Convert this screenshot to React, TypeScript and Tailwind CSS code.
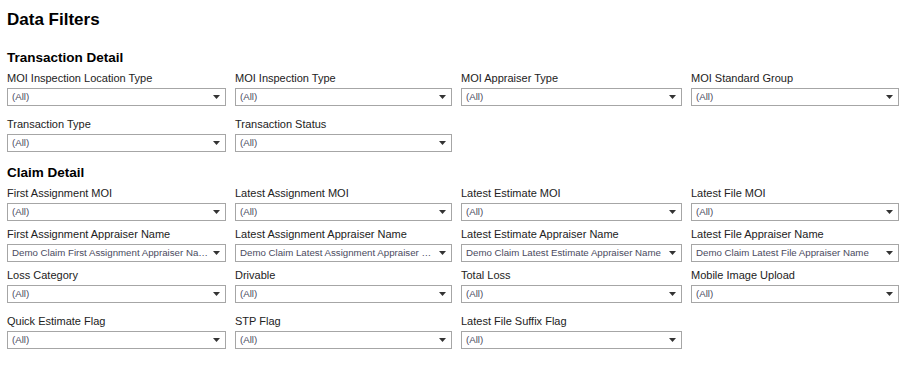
import React from "react";

type Field = { label: string; value?: string };

const widths = ["w-[219px]", "w-[217px]", "w-[221px]", "w-[208px]"];

function Caret() {
  return (
    <svg viewBox="0 0 7 4" className="w-[7px] h-[4px] shrink-0 text-[#333]" fill="currentColor">
      <path d="M0 0h7L3.5 4z" />
    </svg>
  );
}

function FilterSelect({ field, width }: { field: Field; width: string }) {
  return (
    <div className={`${width} shrink-0`}>
      <div className="text-[11px] leading-[14px] text-[#222] whitespace-nowrap">{field.label}</div>
      <div className="mt-[3px] h-[18px] border border-[#a6a6a6] bg-white flex items-center pl-[4px] pr-[5px] gap-[3px]">
        <span className="flex-1 truncate text-[9.7px] leading-[12px] text-[#4a4a5e]">
          {field.value ?? "(All)"}
        </span>
        <Caret />
      </div>
    </div>
  );
}

function FilterRow({ fields, className }: { fields: Field[]; className: string }) {
  return (
    <div className={`flex gap-x-[9px] ${className}`}>
      {fields.map((f, i) => (
        <FilterSelect key={f.label} field={f} width={widths[i]} />
      ))}
    </div>
  );
}

export default function App() {
  return (
    <div
      className="w-[906px] h-[370px] bg-white pt-[10px] px-[7px] overflow-hidden"
      style={{ fontFamily: '"Liberation Sans", Arial, sans-serif' }}
    >
      <h1 className="text-[17px] leading-[20px] font-bold text-black">Data Filters</h1>

      {/* Transaction detail */}
      <h2 className="mt-[19px] text-[13.5px] leading-[17px] font-bold text-black">Transaction Detail</h2>
      <FilterRow
        className="mt-[5px]"
        fields={[
          { label: "MOI Inspection Location Type" },
          { label: "MOI Inspection Type" },
          { label: "MOI Appraiser Type" },
          { label: "MOI Standard Group" },
        ]}
      />
      <FilterRow
        className="mt-[11px]"
        fields={[{ label: "Transaction Type" }, { label: "Transaction Status" }]}
      />

      {/* Claim detail */}
      <h2 className="mt-[12px] text-[13.5px] leading-[17px] font-bold text-black">Claim Detail</h2>
      <FilterRow
        className="mt-[5px]"
        fields={[
          { label: "First Assignment MOI" },
          { label: "Latest Assignment MOI" },
          { label: "Latest Estimate MOI" },
          { label: "Latest File MOI" },
        ]}
      />
      <FilterRow
        className="mt-[6px]"
        fields={[
          { label: "First Assignment Appraiser Name", value: "Demo Claim First Assignment Appraiser Name" },
          { label: "Latest Assignment Appraiser Name", value: "Demo Claim Latest Assignment Appraiser Name" },
          { label: "Latest Estimate Appraiser Name", value: "Demo Claim Latest Estimate Appraiser Name" },
          { label: "Latest File Appraiser Name", value: "Demo Claim Latest File Appraiser Name" },
        ]}
      />
      <FilterRow
        className="mt-[6px]"
        fields={[
          { label: "Loss Category" },
          { label: "Drivable" },
          { label: "Total Loss" },
          { label: "Mobile Image Upload" },
        ]}
      />
      <FilterRow
        className="mt-[11px]"
        fields={[{ label: "Quick Estimate Flag" }, { label: "STP Flag" }, { label: "Latest File Suffix Flag" }]}
      />
    </div>
  );
}
